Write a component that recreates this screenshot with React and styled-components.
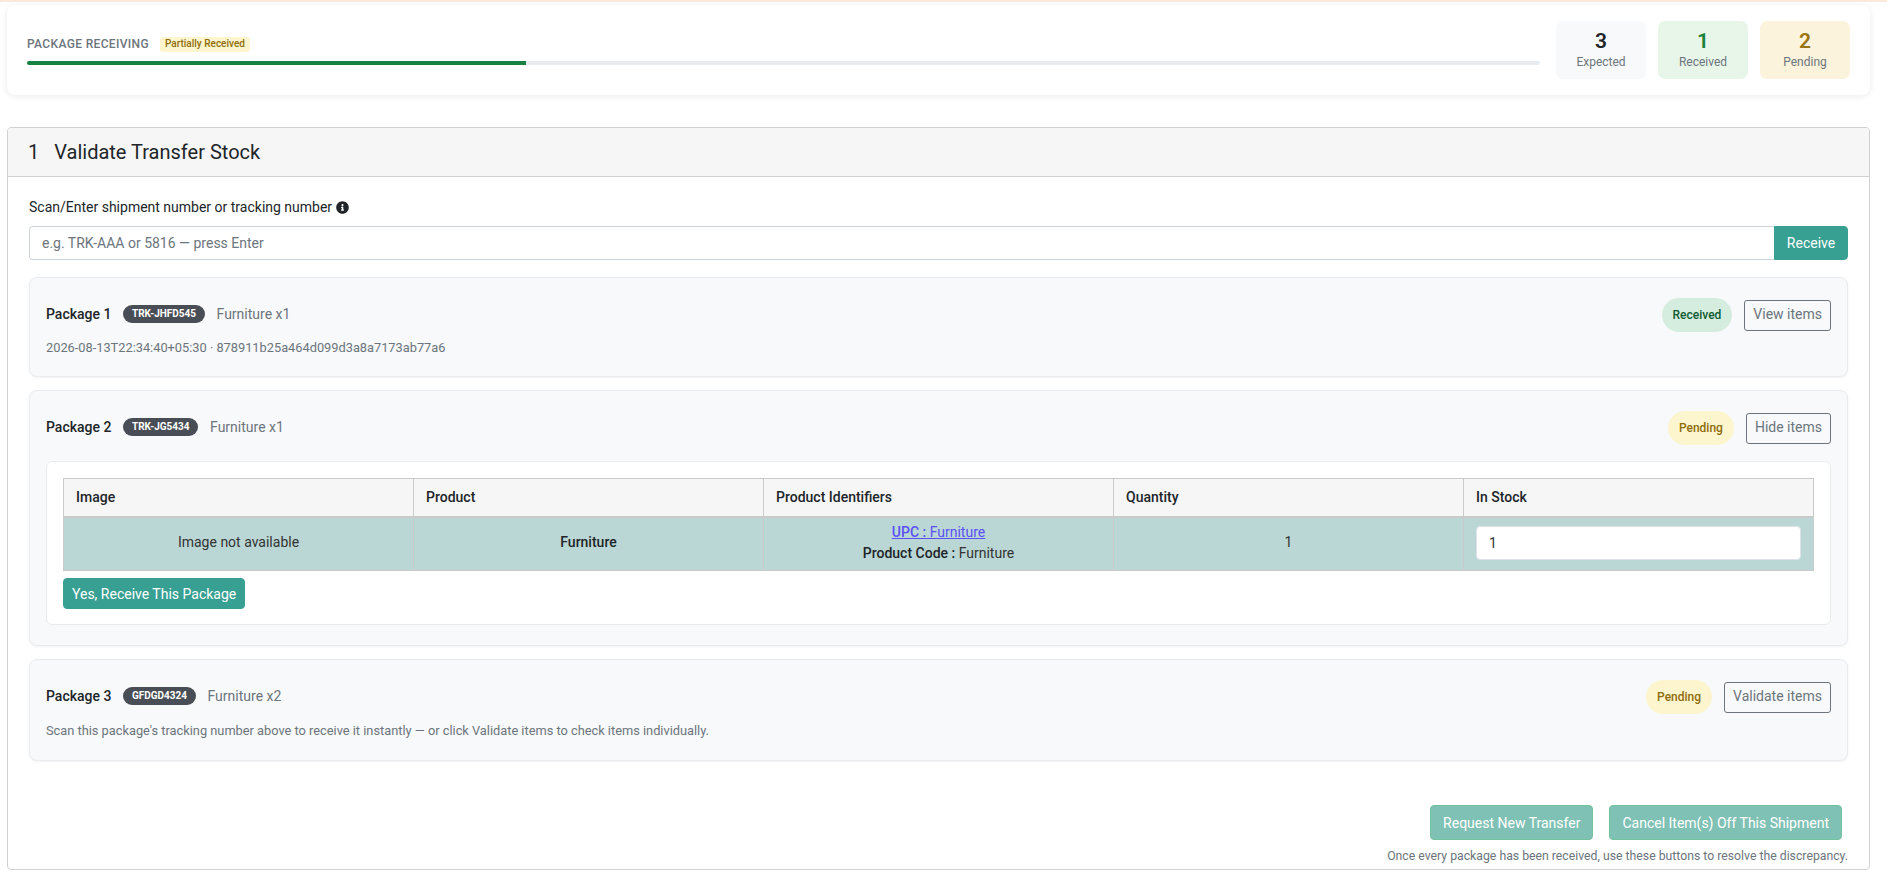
import React from 'react';
import styled, { createGlobalStyle } from 'styled-components';
import { FaInfoCircle } from 'react-icons/fa';

const GlobalStyle = createGlobalStyle`
  html, body {
    margin: 0;
    padding: 0;
    background-color: #fff;
  }
  body {
    font-family: Roboto, "Liberation Sans", sans-serif;
    font-size: 14px;
    color: #212529;
  }
  * {
    box-sizing: border-box;
  }
`;

const tones = {
  neutral: { bg: '#f8f9fa', num: '#212529' },
  success: { bg: '#e8f5e9', num: '#198038' },
  warning: { bg: '#fbf3db', num: '#9a7412' },
};

const pillTones = {
  received: { bg: '#d5eddf', color: '#0f5a32' },
  pending: { bg: '#fdf5cd', color: '#8f6c0a' },
};

const Page = styled.div`
  border-top: 2px solid #fbe9dc;
  padding: 3px 17px 0 7px;
`;

const SummaryCard = styled.div`
  display: flex;
  align-items: center;
  gap: 16px;
  height: 90px;
  padding: 16px 20px;
  background-color: #fff;
  border-radius: 8px;
  box-shadow: 0 1px 6px rgba(0, 0, 0, 0.09);
`;

const ProgressCol = styled.div`
  flex: 1;
  padding-top: 1px;
`;

const ProgressTitle = styled.div`
  display: flex;
  align-items: center;
  gap: 11px;
  height: 15px;
  margin-bottom: 9px;
`;

const Eyebrow = styled.span`
  font-size: 12px;
  font-weight: 500;
  letter-spacing: 0.35px;
  text-transform: uppercase;
  color: #6c757d;
`;

const StatusTag = styled.span`
  padding: 0 5px 2px;
  height: 15px;
  line-height: 13px;
  font-size: 10px;
  font-weight: 500;
  color: #8f6c0a;
  background-color: #fdf5cd;
  border-radius: 3px;
`;

const ProgressTrack = styled.div`
  height: 4px;
  background-color: #e9ecef;
  border-radius: 2px;
  overflow: hidden;
`;

const ProgressFill = styled.div`
  height: 100%;
  background-color: #178242;
`;

const Stats = styled.div`
  display: flex;
  gap: 12px;
`;

const Stat = styled.div`
  width: 90px;
  height: 58px;
  padding-top: 8px;
  text-align: center;
  border-radius: 7px;
  background-color: ${(props) => tones[props.$tone].bg};

  strong {
    display: block;
    font-size: 21px;
    line-height: 25px;
    font-weight: 600;
    color: ${(props) => tones[props.$tone].num};
  }
  span {
    display: block;
    font-size: 12px;
    line-height: 17px;
    color: #6c757d;
  }
`;

const Section = styled.section`
  margin-top: 32px;
  background-color: #fff;
  border: 1px solid #cfd1d3;
  border-radius: 4px;
`;

const SectionHeader = styled.h2`
  display: flex;
  gap: 15px;
  height: 49px;
  margin: 0;
  padding-left: 20px;
  align-items: center;
  font-size: 20px;
  font-weight: 400;
  color: #212529;
  background-color: #f6f6f6;
  border-bottom: 1px solid #cfd1d3;
  border-radius: 3px 3px 0 0;
`;

const SectionBody = styled.div`
  padding: 20px 21px 5px;
`;

const FieldLabel = styled.label`
  display: flex;
  align-items: center;
  gap: 4px;
  line-height: 21px;
  margin-bottom: 8px;

  svg {
    width: 13px;
    height: 13px;
    color: #212529;
  }
`;

const InputGroup = styled.div`
  display: flex;
`;

const ScanInput = styled.input`
  flex: 1;
  height: 34px;
  padding: 6px 12px;
  font-family: inherit;
  font-size: 14px;
  border: 1px solid #ced4da;
  border-right: 0;
  border-radius: 4px 0 0 4px;

  &::placeholder {
    color: #6c757d;
  }
`;

const TealButton = styled.button`
  height: ${(props) => props.$height || '34px'};
  padding: 0 ${(props) => props.$pad || '12px'};
  font-family: inherit;
  font-size: 14px;
  color: #fff;
  background-color: #38a092;
  border: 1px solid #38a092;
  border-radius: 4px;
`;

const ReceiveButton = styled(TealButton)`
  width: 74px;
  padding: 0;
  border-radius: 0 4px 4px 0;
`;

const PackageList = styled.div`
  display: flex;
  flex-direction: column;
  gap: 13px;
  margin-top: 17px;
`;

const PackageCard = styled.div`
  padding: 20px 16px;
  background-color: #f8f9fa;
  border: 1px solid #e9ecef;
  border-radius: 8px;
  box-shadow: 0 1px 3px rgba(0, 0, 0, 0.05);
`;

const PackageHead = styled.div`
  display: flex;
  align-items: center;
  justify-content: space-between;
  height: 34px;
`;

const PackageInfo = styled.div`
  display: flex;
  align-items: center;
  gap: 12px;
  margin-top: -2px;
`;

const PackageName = styled.span`
  font-size: 14px;
  font-weight: 500;
  color: #212529;
`;

const TrackingBadge = styled.span`
  height: 18px;
  padding: 0 8.5px;
  font-size: 10px;
  line-height: 17px;
  font-weight: 700;
  color: #fff;
  background-color: #494d55;
  border-radius: 9px;
`;

const PackageSummary = styled.span`
  font-size: 14px;
  color: #6c757d;
`;

const PackageActions = styled.div`
  display: flex;
  align-items: center;
  gap: 12px;
`;

const StatusPill = styled.span`
  height: 34px;
  padding: 0 11px;
  font-size: 12px;
  line-height: 34px;
  font-weight: 500;
  color: ${(props) => pillTones[props.$status].color};
  background-color: ${(props) => pillTones[props.$status].bg};
  border-radius: 17px;
`;

const OutlineButton = styled.button`
  height: 31px;
  padding: 0 8px 2px;
  font-family: inherit;
  font-size: 14px;
  color: #6c757d;
  background-color: transparent;
  border: 1px solid #6c757d;
  border-radius: 3px;
`;

const PackageNote = styled.div`
  margin-top: ${(props) => (props.$hint ? '9px' : '8px')};
  padding-bottom: ${(props) => (props.$hint ? '1px' : '0')};
  font-size: 12.8px;
  line-height: 16px;
  color: #6c757d;
`;

const ItemsPanel = styled.div`
  margin-top: 16px;
  padding: 16px 16px 15px;
  background-color: #fff;
  border: 1px solid #e9ecef;
  border-radius: 6px;
`;

const ItemsTable = styled.table`
  width: 100%;
  table-layout: fixed;
  border-collapse: collapse;
  font-size: 14px;

  th, td {
    border: 1px solid #c9cbcb;
  }
  th {
    height: 38px;
    padding: 0 12px;
    text-align: left;
    font-weight: 500;
    background-color: #f6f6f6;
    border-bottom-width: 2px;
  }
  td {
    height: 54px;
    padding: 4px 12px 6px;
    text-align: center;
    line-height: 21px;
    color: #333;
    background-color: #bad7d5;
  }
`;

const Strong = styled.strong`
  font-weight: 500;
  color: #212529;
`;

const IdentifierLink = styled.a`
  color: #5a50f5;
  text-decoration: underline;

  b {
    font-weight: 500;
  }
`;

const StockInput = styled.input`
  display: block;
  width: 100%;
  height: 34px;
  padding: 6px 12px;
  font-family: inherit;
  font-size: 14px;
  color: #333;
  background-color: #fff;
  border: 1px solid #dee2e6;
  border-radius: 4px;
`;

const ConfirmRow = styled.div`
  margin-top: 7px;
`;

const FooterActions = styled.div`
  display: flex;
  justify-content: flex-end;
  gap: 16px;
  margin-top: 44px;
  padding-right: 6px;
`;

const MutedButton = styled(TealButton)`
  background-color: #7fc1b5;
  border-color: #74c29b;
`;

const FooterNote = styled.div`
  margin-top: 8px;
  font-size: 12.25px;
  line-height: 16px;
  text-align: right;
  color: #6c757d;
`;

const packages = [
  {
    id: 1,
    tracking: 'TRK-JHFD545',
    summary: 'Furniture x1',
    status: 'received',
    action: 'View items',
    note: '2026-08-13T22:34:40+05:30 · 878911b25a464d099d3a8a7173ab77a6',
  },
  {
    id: 2,
    tracking: 'TRK-JG5434',
    summary: 'Furniture x1',
    status: 'pending',
    action: 'Hide items',
    open: true,
  },
  {
    id: 3,
    tracking: 'GFDGD4324',
    summary: 'Furniture x2',
    status: 'pending',
    action: 'Validate items',
    hint: true,
    note: "Scan this package's tracking number above to receive it instantly — or click Validate items to check items individually.",
  },
];

const PackageItems = () => (
  <ItemsPanel>
    <ItemsTable>
      <thead>
        <tr>
          <th>Image</th>
          <th>Product</th>
          <th>Product Identifiers</th>
          <th>Quantity</th>
          <th>In Stock</th>
        </tr>
      </thead>
      <tbody>
        <tr>
          <td>Image not available</td>
          <td><Strong>Furniture</Strong></td>
          <td>
            <IdentifierLink href="#upc"><b>UPC :</b> Furniture</IdentifierLink>
            <br />
            <Strong>Product Code :</Strong> Furniture
          </td>
          <td>1</td>
          <td><StockInput defaultValue="1" /></td>
        </tr>
      </tbody>
    </ItemsTable>
    <ConfirmRow>
      <TealButton $height="31px" $pad="8px">Yes, Receive This Package</TealButton>
    </ConfirmRow>
  </ItemsPanel>
);

const App = () => {
  return (
    <Page>
      <GlobalStyle />
      <SummaryCard>
        <ProgressCol>
          <ProgressTitle>
            <Eyebrow>Package Receiving</Eyebrow>
            <StatusTag>Partially Received</StatusTag>
          </ProgressTitle>
          <ProgressTrack>
            <ProgressFill style={{ width: '33%' }} />
          </ProgressTrack>
        </ProgressCol>
        <Stats>
          <Stat $tone="neutral"><strong>3</strong><span>Expected</span></Stat>
          <Stat $tone="success"><strong>1</strong><span>Received</span></Stat>
          <Stat $tone="warning"><strong>2</strong><span>Pending</span></Stat>
        </Stats>
      </SummaryCard>

      <Section>
        <SectionHeader><span>1</span><span>Validate Transfer Stock</span></SectionHeader>
        <SectionBody>
          <FieldLabel>
            Scan/Enter shipment number or tracking number <FaInfoCircle />
          </FieldLabel>
          <InputGroup>
            <ScanInput placeholder="e.g. TRK-AAA or 5816 — press Enter" />
            <ReceiveButton>Receive</ReceiveButton>
          </InputGroup>

          <PackageList>
            {packages.map((pkg) => (
              <PackageCard key={pkg.id}>
                <PackageHead>
                  <PackageInfo>
                    <PackageName>Package {pkg.id}</PackageName>
                    <TrackingBadge>{pkg.tracking}</TrackingBadge>
                    <PackageSummary>{pkg.summary}</PackageSummary>
                  </PackageInfo>
                  <PackageActions>
                    <StatusPill $status={pkg.status}>
                      {pkg.status === 'received' ? 'Received' : 'Pending'}
                    </StatusPill>
                    <OutlineButton>{pkg.action}</OutlineButton>
                  </PackageActions>
                </PackageHead>
                {pkg.note && <PackageNote $hint={pkg.hint}>{pkg.note}</PackageNote>}
                {pkg.open && <PackageItems />}
              </PackageCard>
            ))}
          </PackageList>

          <FooterActions>
            <MutedButton $height="35px">Request New Transfer</MutedButton>
            <MutedButton $height="35px">Cancel Item(s) Off This Shipment</MutedButton>
          </FooterActions>
          <FooterNote>Once every package has been received, use these buttons to resolve the discrepancy.</FooterNote>
        </SectionBody>
      </Section>
    </Page>
  );
};

export default App;
